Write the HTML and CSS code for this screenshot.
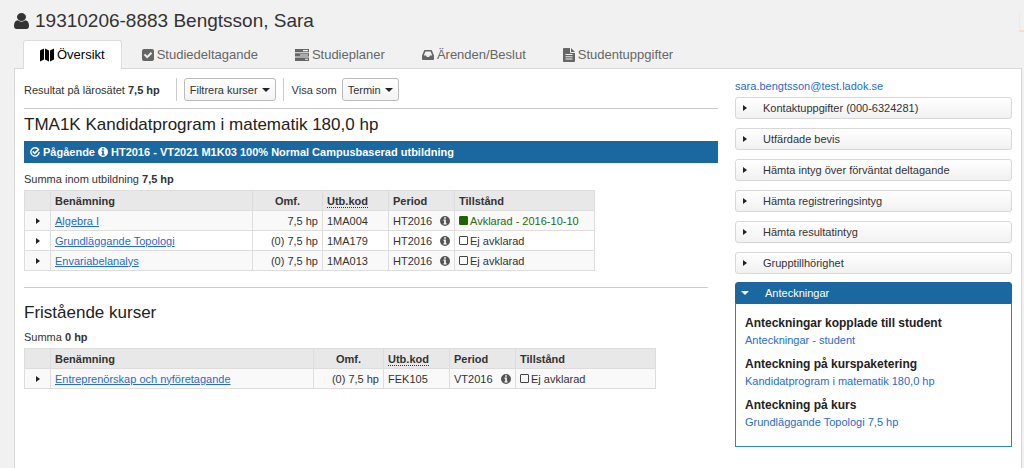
FILE: index.html
```html
<!DOCTYPE html>
<html lang="sv">
<head>
<meta charset="utf-8">
<title>19310206-8883 Bengtsson, Sara</title>
<link rel="stylesheet" href="styles.css">
</head>
<body>
<svg class="defs" aria-hidden="true">
  <symbol id="info" viewBox="0 0 12 12"><path fill-rule="evenodd" d="M6 0a6 6 0 1 0 0 12A6 6 0 0 0 6 0zM5 1.6h2v1.7H5zM4.2 4.3H7v4.5h.9v1.4H4.200V8.800h.8V5.700h-.8z"/></symbol>
</svg>
<header class="page-head">
  <h1 class="student">
    <svg class="user-icon" viewBox="256 128 1280 1536" preserveAspectRatio="none" aria-hidden="true"><path d="M1536 1399q0 109-62.500 187t-150.500 78h-854q-88 0-150.500-78t-62.500-187q0-85 8.500-160.500t31.500-152 58.500-131 94-89 134.500-34.500q131 128 313 128t313-128q76 0 134.500 34.500t94 89 58.500 131 31.500 152 8.500 160.500zm-256-887q0 159-112.500 271.500t-271.500 112.500-271.500-112.500-112.500-271.500 112.500-271.500 271.500-112.500 271.500 112.500 112.500 271.500z"/></svg>
    19310206-8883 Bengtsson, Sara
  </h1>
  <span class="flag" aria-hidden="true"></span>
</header>
<nav class="tabs">
  <a class="tab tab-active" href="#oversikt"><svg class="icon" viewBox="0 0 14 14" aria-hidden="true"><path d="M0 2.500 4 .5v11l-4 2zM5 .5l4 2v11l-4-2zM10 2.500l4-2v11l-4 2z"/></svg>Översikt</a>
  <a class="tab" href="#deltagande"><svg class="icon icon-small" viewBox="0 0 12 12" aria-hidden="true"><path fill-rule="evenodd" d="M2 0h8a2 2 0 0 1 2 2v8a2 2 0 0 1-2 2H2a2 2 0 0 1-2-2V2a2 2 0 0 1 2-2zM5.200 9.500l5-5-1.400-1.400-3.600 3.600-2-2L1.800 6.100z"/></svg>Studiedeltagande</a>
  <a class="tab" href="#planer"><svg class="icon" viewBox="0 0 14 12" aria-hidden="true"><path fill-rule="evenodd" d="M0 0h14v3.300H0zM8 1.100v1.100h5V1.100zM0 4.300h14v3.300H0zM5 5.400v1.100h8V5.400zM0 8.600h14V12H0zM10 9.700v1.100h3V9.700z"/></svg>Studieplaner</a>
  <a class="tab" href="#arenden"><svg class="icon icon-small" viewBox="0 0 12 10" aria-hidden="true"><path fill-rule="evenodd" d="M2.300 0h7.400L12 5.500V9a1 1 0 0 1-1 1H1a1 1 0 0 1-1-1V5.500zM3.400 1.600 1.800 5.500h2.300l.8 1.600h2.200l.8-1.600h2.300L8.600 1.600z"/></svg>Ärenden/Beslut</a>
  <a class="tab" href="#uppgifter"><svg class="icon icon-small" viewBox="0 0 12 14" aria-hidden="true"><path fill-rule="evenodd" d="M.8 0H7v4.200q0 .8.800.8H12v8.200q0 .8-.8.8H.8q-.8 0-.8-.8V.8Q0 0 .8 0zM8 0l4 4H8zM2.500 6v1h7V6zM2.500 8.300v1h7v-1zM2.500 10.600v1h7v-1z"/></svg>Studentuppgifter</a>
</nav>
<div class="panel">
  <main class="main">
    <div class="toolbar">
      <span class="result">Resultat på lärosätet <b>7,5 hp</b></span>
      <span class="filter"><button class="drop" type="button">Filtrera kurser<span class="caret"></span></button></span>
      <span class="show-as">Visa som</span>
      <button class="drop" type="button">Termin<span class="caret"></span></button>
    </div>
    <section class="program">
      <h2 class="heading">TMA1K Kandidatprogram i matematik 180,0 hp</h2>
      <p class="status">
        <svg class="mark" viewBox="0 0 12 12" aria-hidden="true"><path d="M10.200 3.200A5 5 0 1 0 11 6" fill="none" stroke="currentColor" stroke-width="1.600"/><path d="M3.300 5.200 5.700 7.600 10.800 2.500" fill="none" stroke="currentColor" stroke-width="2"/></svg>
        Pågående
        <svg class="mark" role="img" aria-label="Information"><use href="#info"/></svg>
        HT2016 - VT2021 M1K03 100% Normal Campusbaserad utbildning
      </p>
      <p class="sum">Summa inom utbildning <b>7,5 hp</b></p>
      <table class="courses courses-program">
        <colgroup><col class="c-toggle"><col class="c-name"><col class="c-credits"><col class="c-code"><col class="c-code"><col></colgroup>
        <thead><tr><th></th><th>Benämning</th><th class="th-credits">Omf.</th><th><abbr>Utb.kod</abbr></th><th>Period</th><th>Tillstånd</th></tr></thead>
        <tbody>
          <tr><td><button class="toggle" type="button" aria-label="Visa Algebra I"></button></td><td><a class="course" href="#a">Algebra I</a></td><td class="credits">7,5 hp</td><td>1MA004</td><td><span class="period">HT2016<svg class="info"><use href="#info"/></svg></span></td><td><span class="state done"><i class="box"></i>Avklarad - 2016-10-10</span></td></tr>
          <tr><td><button class="toggle" type="button" aria-label="Visa Grundläggande Topologi"></button></td><td><a class="course" href="#g">Grundläggande Topologi</a></td><td class="credits">(0) 7,5 hp</td><td>1MA179</td><td><span class="period">HT2016<svg class="info"><use href="#info"/></svg></span></td><td><span class="state"><i class="box"></i>Ej avklarad</span></td></tr>
          <tr><td><button class="toggle" type="button" aria-label="Visa Envariabelanalys"></button></td><td><a class="course" href="#e">Envariabelanalys</a></td><td class="credits">(0) 7,5 hp</td><td>1MA013</td><td><span class="period">HT2016<svg class="info"><use href="#info"/></svg></span></td><td><span class="state"><i class="box"></i>Ej avklarad</span></td></tr>
        </tbody>
      </table>
    </section>
    <section class="single">
      <h2 class="heading">Fristående kurser</h2>
      <p class="sum">Summa <b>0 hp</b></p>
      <table class="courses courses-single">
        <colgroup><col class="c-toggle"><col class="c-name-wide"><col class="c-credits"><col class="c-code"><col class="c-code"><col></colgroup>
        <thead><tr><th></th><th>Benämning</th><th class="th-credits">Omf.</th><th><abbr>Utb.kod</abbr></th><th>Period</th><th>Tillstånd</th></tr></thead>
        <tbody>
          <tr><td><button class="toggle" type="button" aria-label="Visa Entreprenörskap och nyföretagande"></button></td><td><a class="course" href="#n">Entreprenörskap och nyföretagande</a></td><td class="credits">(0) 7,5 hp</td><td>FEK105</td><td><span class="period">VT2016<svg class="info"><use href="#info"/></svg></span></td><td><span class="state"><i class="box"></i>Ej avklarad</span></td></tr>
        </tbody>
      </table>
    </section>
  </main>
  <aside class="side">
    <a class="link" href="#mail">sara.bengtsson@test.ladok.se</a>
    <div class="accordion">
      <button class="item" type="button">Kontaktuppgifter (000-6324281)</button>
      <button class="item" type="button">Utfärdade bevis</button>
      <button class="item" type="button">Hämta intyg över förväntat deltagande</button>
      <button class="item" type="button">Hämta registreringsintyg</button>
      <button class="item" type="button">Hämta resultatintyg</button>
      <button class="item" type="button">Grupptillhörighet</button>
    </div>
    <section class="notes">
      <button class="item item-open" type="button" aria-expanded="true">Anteckningar</button>
      <div class="notes-body">
        <h3 class="note-head">Anteckningar kopplade till student</h3>
        <a class="link note-link" href="#s">Anteckningar - student</a>
        <h3 class="note-head">Anteckning på kurspaketering</h3>
        <a class="link note-link" href="#k">Kandidatprogram i matematik 180,0 hp</a>
        <h3 class="note-head">Anteckning på kurs</h3>
        <a class="link note-link" href="#t">Grundläggande Topologi 7,5 hp</a>
      </div>
    </section>
  </aside>
</div>
</body>
</html>
```
FILE: styles.css
```css
*, *::before { box-sizing: border-box; }
body {
  display: flex;
  flex-direction: column;
  min-height: 100vh;
  margin: 0;
  background: #f1f1f1;
  color: #333;
  font: 11px/16px "Liberation Sans", Arial, sans-serif;
}
h1, h2, h3, p { margin: 0; }
button { font: inherit; color: inherit; cursor: pointer; }
svg { fill: currentColor; flex: none; }
.defs { position: absolute; width: 0; height: 0; }

.page-head {
  display: flex;
  justify-content: space-between;
  padding: 9px 0 7px 14px;
}
.student {
  display: flex;
  align-items: center;
  gap: 6px;
  font-size: 19px;
  line-height: 24px;
  font-weight: normal;
}
.user-icon { width: 15px; height: 16px; }
.flag {
  width: 5px;
  height: 18px;
  margin-top: 5px;
  border-left: 1px solid #f5e8d4;
  border-bottom: 2px solid #f8dfba;
}

.tabs { display: flex; padding-left: 23px; }
.tab {
  display: flex;
  align-items: center;
  gap: 3px;
  height: 28px;
  margin-right: 3px;
  padding: 0 16px;
  border: 1px solid transparent;
  border-bottom: 0;
  border-radius: 3px 3px 0 0;
  color: #666;
  font-size: 13px;
  text-decoration: none;
}
.tab-active {
  position: relative;
  height: 29px;
  margin-bottom: -1px;
  border-color: #ddd;
  background: #fff;
  color: #000;
}
.icon { width: 14px; height: 14px; }
.icon-small { width: 12px; }

.panel {
  display: flex;
  flex: 1;
  gap: 17px;
  margin: 0 2px 0 14px;
  padding: 9px 9px 20px;
  border: 1px solid #d8d8d8;
  border-bottom: 0;
  background: #fff;
}
.main { flex: 1; min-width: 0; }
.toolbar {
  display: flex;
  align-items: center;
  padding-bottom: 7px;
  border-bottom: 1px solid #ccc;
}
.result { padding-right: 16px; }
.filter {
  display: flex;
  padding: 0 7px;
  border: solid #ccc;
  border-width: 0 1px;
}
.show-as { padding: 0 5px 0 8px; }
.drop {
  display: flex;
  align-items: center;
  gap: 4px;
  height: 23px;
  padding: 0 5px;
  border: 1px solid #bbb;
  border-radius: 3px;
  background: linear-gradient(#fff, #f3f3f3);
  white-space: nowrap;
}
.caret {
  border: 4px solid transparent;
  border-top-color: #222;
  border-bottom: 0;
}

.heading { font-size: 17px; line-height: 20px; font-weight: normal; color: #222; }
.program { padding-top: 6px; }
.program .heading { margin-bottom: 6px; }
.status {
  display: flex;
  align-items: center;
  gap: 3px;
  height: 22px;
  margin-bottom: 8px;
  padding-left: 6px;
  background: #1a689f;
  color: #fff;
  font-weight: bold;
}
.mark { width: 10px; height: 10px; }
.sum { margin-bottom: 3px; }
.courses {
  border-collapse: collapse;
  table-layout: fixed;
}
.courses-program { width: 571px; }
.courses-single { width: 632px; }
.c-toggle { width: 26px; }
.c-name { width: 202px; }
.c-name-wide { width: 263px; }
.c-credits { width: 70px; }
.c-code { width: 66px; }
.courses th, .courses td {
  height: 20px;
  padding: 1px 4px;
  border: 1px solid #ddd;
  text-align: left;
  white-space: nowrap;
}
.courses th { background: #e8e8e8; }
.courses tbody tr:nth-child(odd) { background: #f9f9f9; }
.courses .th-credits { text-align: center; }
.courses .credits { text-align: right; }
.courses abbr { border-bottom: 1px dotted #333; }
.toggle {
  display: block;
  width: 4px;
  height: 6px;
  margin-left: 7px;
  padding: 0;
  border: solid transparent;
  border-width: 3px 0 3px 4px;
  border-left-color: #222;
  background: none;
}
.course { color: #2a6bcb; }
.period { display: flex; align-items: center; justify-content: space-between; }
.info { width: 10px; height: 10px; color: #555; }
.state { display: flex; align-items: center; gap: 2px; }
.box {
  width: 9px;
  height: 9px;
  border: 1px solid #444;
  border-radius: 1px;
}
.done { color: #2a6b0c; }
.done .box { border-color: #1f6400; background: #1f6400; }
.single {
  margin: 16px 10px 0 0;
  padding-top: 15px;
  border-top: 1px solid #ccc;
}
.single .heading { margin-bottom: 6px; }

.side { display: flex; flex-direction: column; width: 277px; }
.link { align-self: start; color: #2a6bcb; text-decoration: none; }
.accordion { display: grid; gap: 9px; margin: 3px 0 8px; }
.item {
  display: flex;
  align-items: center;
  width: 100%;
  height: 22px;
  padding: 0 7px;
  border: 1px solid #d8d8d8;
  border-radius: 3px;
  background: linear-gradient(#fff, #f1f1f1);
}
.item::before {
  width: 4px;
  margin-right: 16px;
  border: solid transparent;
  border-width: 3px 0 3px 4px;
  border-left-color: #222;
  content: "";
}
.item-open {
  padding: 0 5px;
  border-color: #1a689f;
  border-radius: 3px 3px 0 0;
  background: #1a689f;
  color: #fff;
}
.item-open::before {
  width: 8px;
  border: 4px solid transparent;
  border-top-color: #fff;
  border-bottom: 0;
}
.notes-body {
  padding: 11px 9px 8px;
  border: 1px solid #2f88bd;
  border-top: 0;
}
.note-head { font-size: 12px; line-height: 16px; color: #222; }
.note-link { display: block; margin: 1px 0 8px; }
```
